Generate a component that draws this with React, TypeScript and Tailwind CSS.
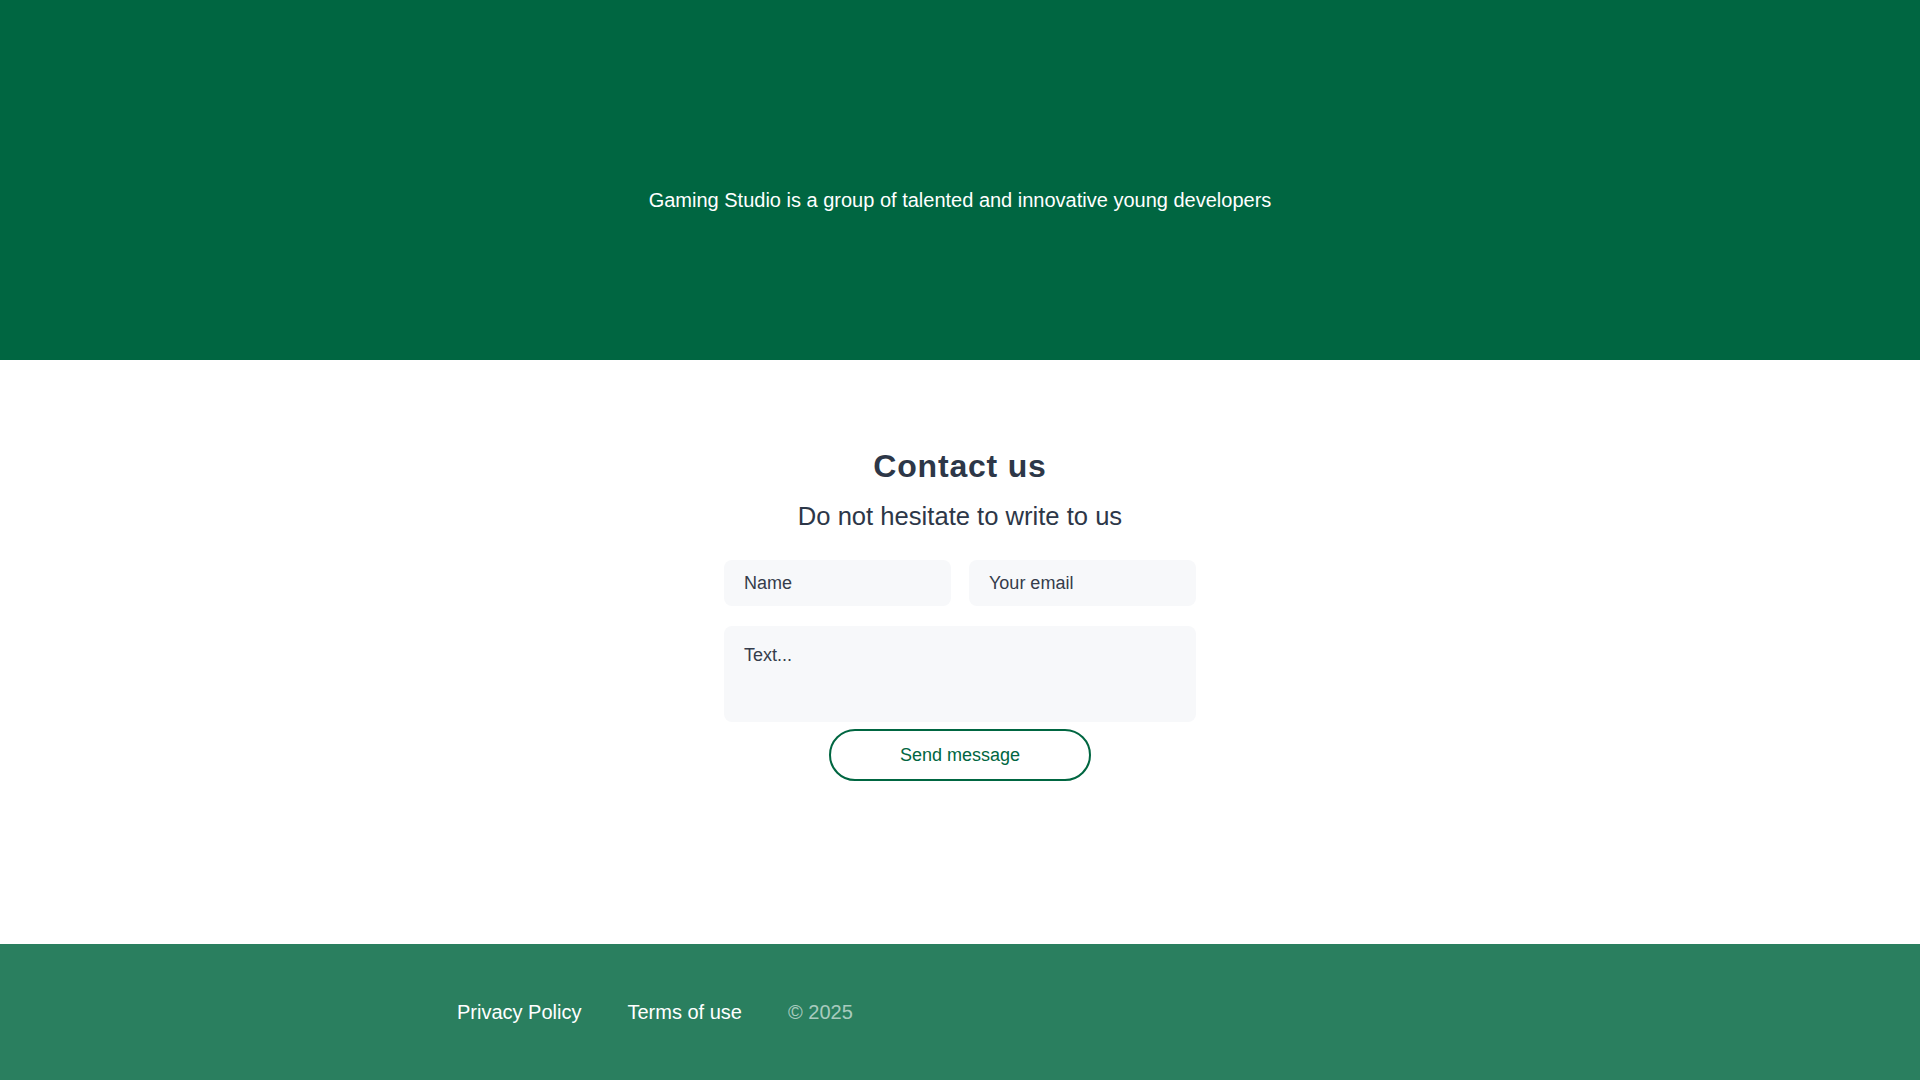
export default function App() {
  return (
    <div className="min-h-screen bg-white font-['Liberation_Sans',Arial,sans-serif]">
      {/* Hero */}
      <section className="h-[360px] bg-[#006641] pt-[186px]">
        <p className="text-center text-[20px] leading-[28px] text-white">
          Gaming Studio is a group of talented and innovative young developers
        </p>
      </section>

      {/* Contact */}
      <section className="flex h-[584px] flex-col items-center pt-[86px]">
        <h2 className="text-[32px] font-bold leading-[40px] tracking-wide text-[#2d3748]">Contact us</h2>
        <p className="mt-[14px] text-[25.6px] leading-[32px] text-[#2d3748]">Do not hesitate to write to us</p>
        <form className="mt-[28px] flex w-[472px] flex-col items-center" onSubmit={(e) => e.preventDefault()}>
          <div className="flex w-full gap-[18px]">
            <input
              type="text"
              placeholder="Name"
              className="h-[46px] w-[227px] rounded-lg bg-[#f7f8fa] px-5 text-[18px] text-[#2d3748] outline-none placeholder:text-[#353c4b]"
            />
            <input
              type="email"
              placeholder="Your email"
              className="h-[46px] w-[227px] rounded-lg bg-[#f7f8fa] px-5 text-[18px] text-[#2d3748] outline-none placeholder:text-[#353c4b]"
            />
          </div>
          <textarea
            placeholder="Text..."
            className="mt-5 h-[96px] w-full resize-none rounded-lg bg-[#f7f8fa] px-5 pb-4 pt-[17px] text-[18px] leading-[24px] text-[#2d3748] outline-none placeholder:text-[#353c4b]"
          />
          <button
            type="submit"
            className="mt-[7px] h-[52px] w-[262px] rounded-full border-2 border-[#006641] bg-white text-[18px] text-[#006641]"
          >
            Send message
          </button>
        </form>
      </section>

      {/* Footer */}
      <footer className="flex h-[136px] items-center bg-[#2a7f5f]">
        <div className="mx-auto flex w-[1006px] items-center gap-[46px] text-[20px] leading-[28px]">
          <a href="#" className="text-white">Privacy Policy</a>
          <a href="#" className="text-white">Terms of use</a>
          <span className="text-white/60">© 2025</span>
        </div>
      </footer>
    </div>
  );
}
